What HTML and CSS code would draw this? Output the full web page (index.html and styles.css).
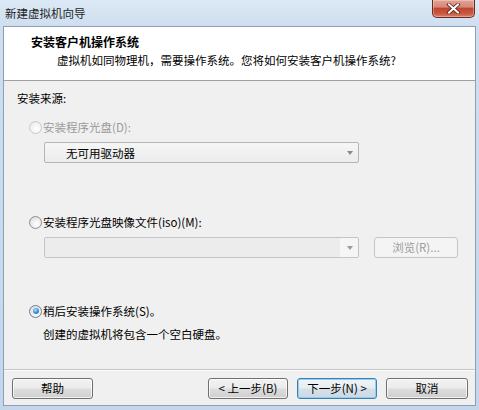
FILE: index.html
```html
<!DOCTYPE html>
<html lang="zh-CN">
<head>
<meta charset="utf-8">
<title>新建虚拟机向导</title>
<link rel="stylesheet" href="styles.css">
</head>
<body>
<div class="window">
  <div class="titlebar">
    <span class="title">新建虚拟机向导</span>
    <button class="close" aria-label="关闭">
      <svg width="15" height="11" viewBox="0 0 15 11">
        <path d="M3 1.5 L12 9.5 M12 1.5 L3 9.5" stroke="#5a2018" stroke-width="3.6" stroke-linecap="square" fill="none"/>
        <path d="M3 1.5 L12 9.5 M12 1.5 L3 9.5" stroke="#ffffff" stroke-width="2" stroke-linecap="square" fill="none"/>
      </svg>
    </button>
  </div>
  <div class="client">
    <div class="header">
      <div class="h-title">安装客户机操作系统</div>
      <div class="h-sub">虚拟机如同物理机，需要操作系统。您将如何安装客户机操作系统?</div>
    </div>
    <div class="body">
      <div class="label">安装来源:</div>
      <div class="radio-row disabled r1">
        <span class="radio radio-disabled"></span>
        <span>安装程序光盘(D):</span>
      </div>
      <div class="combo combo-drive">
        <span class="combo-text">无可用驱动器</span>
        <span class="arrow"></span>
      </div>
      <div class="radio-row r2">
        <span class="radio"></span>
        <span>安装程序光盘映像文件(iso)(M):</span>
      </div>
      <div class="iso-row">
        <div class="combo combo-iso">
          <span class="combo-fill"></span>
          <span class="arrow-box"><span class="arrow"></span></span>
        </div>
        <div class="browse">浏览(R)...</div>
      </div>
      <div class="radio-row r3">
        <span class="radio radio-checked"><span class="dot"></span></span>
        <span>稍后安装操作系统(S)。</span>
      </div>
      <div class="desc">创建的虚拟机将包含一个空白硬盘。</div>
    </div>
    <div class="footer">
      <button class="btn">帮助</button>
      <div class="nav">
        <button class="btn btn-back">&lt; 上一步(B)</button>
        <button class="btn btn-default">下一步(N) &gt;</button>
        <button class="btn btn-cancel">取消</button>
      </div>
    </div>
  </div>
</div>
</body>
</html>
```
FILE: styles.css
```css
html, body {
  margin: 0;
  padding: 0;
}
body {
  width: 479px;
  height: 410px;
  overflow: hidden;
  font-family: "Noto Sans CJK SC", "Noto Sans", sans-serif;
  font-size: 11.5px;
  color: #000;
}
.window {
  width: 479px;
  height: 410px;
  box-sizing: border-box;
  background: linear-gradient(180deg, #dce8f5 0px, #cfdff0 26px, #c3d6ec 100%);
  padding: 0 3px 4px 3px;
  display: flex;
  flex-direction: column;
}
.titlebar {
  height: 26px;
  display: flex;
  align-items: flex-start;
  justify-content: space-between;
}
.title {
  margin-left: 2px;
  margin-top: 5px;
  line-height: 16px;
  color: #1e1e1e;
}
.close {
  width: 43px;
  height: 18px;
  margin-right: 1px;
  padding: 0;
  border: 1px solid #6b2a20;
  border-top: none;
  border-radius: 0 0 5px 5px;
  background: linear-gradient(180deg, #e3a193 0%, #d7897a 40%, #c0462f 50%, #c95940 80%, #d9806a 100%);
  box-shadow: inset 0 0 0 1px rgba(255,255,255,0.3);
  display: flex;
  align-items: center;
  justify-content: center;
}
.client {
  flex: 1;
  border: 1px solid #8d9fb4;
  background: #f0f0f0;
  display: flex;
  flex-direction: column;
}
.header {
  box-sizing: border-box;
  background: #fff;
  border-bottom: 1px solid #a0a0a0;
  height: 54px;
  padding-top: 7px;
}
.h-title {
  font-size: 12px;
  font-weight: bold;
  line-height: 16px;
  padding-left: 27px;
}
.h-sub {
  line-height: 16px;
  margin-top: 2px;
  padding-left: 53px;
}
.body {
  height: 288px;
  box-sizing: border-box;
  padding: 9px 0 0 13px;
  display: flex;
  flex-direction: column;
  align-items: flex-start;
}
.label {
  line-height: 16px;
}
.radio-row {
  display: flex;
  align-items: center;
  height: 16px;
  line-height: 16px;
  margin-left: 12px;
}
.radio-row.disabled {
  color: #9a9a9a;
}
.r1 { margin-top: 13px; }
.r2 { margin-top: 51px; }
.r3 { margin-top: 45px; }
.radio {
  width: 11px;
  height: 11px;
  border: 1px solid #8f8f8f;
  border-radius: 50%;
  background: radial-gradient(circle at 60% 65%, #ffffff 0%, #eeeeee 45%, #d0d0d0 100%);
  margin-right: 1px;
  display: flex;
  align-items: center;
  justify-content: center;
  flex: none;
}
.radio-disabled {
  border-color: #c9c9c9;
  background: radial-gradient(circle at 60% 65%, #ffffff 0%, #f4f4f4 50%, #e2e2e2 100%);
}
.radio-checked {
  border-color: #6f7f91;
}
.dot {
  width: 6px;
  height: 6px;
  border-radius: 50%;
  background: radial-gradient(circle at 40% 35%, #b9e3ff 0%, #3f9be0 45%, #125a9e 100%);
}
.combo {
  box-sizing: border-box;
  height: 21px;
  width: 315px;
  border: 1px solid #b5b5b5;
  border-radius: 2px;
  display: flex;
  align-items: center;
  position: relative;
}
.combo-drive {
  margin-top: 7px;
  margin-left: 27px;
  background: linear-gradient(180deg, #f6f6f6 0%, #f1f1f1 50%, #ececec 100%);
}
.combo-text {
  flex: 1;
  padding-left: 21px;
  line-height: 16px;
}
.arrow {
  width: 0;
  height: 0;
  border-left: 3.5px solid transparent;
  border-right: 3.5px solid transparent;
  border-top: 4px solid #8a8a8a;
  margin-right: 5px;
}
.iso-row {
  display: flex;
  align-items: center;
  margin-top: 7px;
  margin-left: 27px;
}
.combo-iso {
  border-color: #c4c4c4;
  background: #f0f0f0;
  overflow: hidden;
}
.combo-fill {
  flex: 1;
  height: 100%;
  background: #ececec;
  border-right: 1px solid #f6f6f6;
}
.arrow-box {
  width: 17px;
  height: 100%;
  background: #f5f5f5;
  display: flex;
  align-items: center;
  justify-content: center;
}
.arrow-box .arrow {
  margin-right: 0;
  border-top-color: #9a9a9a;
}
.browse {
  box-sizing: border-box;
  width: 84px;
  height: 21px;
  margin-left: 15px;
  border: 1px solid #c4c4c4;
  border-radius: 3px;
  background: #f4f4f4;
  color: #9d9d9d;
  text-align: center;
  line-height: 19px;
}
.desc {
  margin-top: 7px;
  margin-left: 26px;
  line-height: 16px;
}
.footer {
  flex: 1;
  border-top: 1px solid #c6c6c6;
  box-shadow: inset 0 1px 0 #fbfbfb;
  display: flex;
  justify-content: space-between;
  align-items: flex-start;
  padding: 8px 7px 0 8px;
}
.nav {
  display: flex;
  gap: 9px;
}
.btn {
  box-sizing: border-box;
  width: 81px;
  height: 21px;
  padding: 0;
  font-family: "Noto Sans CJK SC", "Noto Sans", sans-serif;
  font-size: 11.5px;
  color: #000;
  line-height: 17px;
  border: 1px solid #707070;
  border-radius: 3px;
  background: linear-gradient(180deg, #f2f2f2 0%, #ebebeb 48%, #dddddd 52%, #cfcfcf 100%);
  box-shadow: inset 0 0 0 1px rgba(255,255,255,0.7);
}
.btn-back { width: 80px; }
.btn-cancel { width: 82px; }
.btn-default {
  width: 80px;
  border-color: #3c7fb1;
  box-shadow: inset 0 0 0 1px #8fd0f3;
  background: linear-gradient(180deg, #f0f4f7 0%, #e6edf2 48%, #d6e0e8 52%, #ccd8e2 100%);
}
```
